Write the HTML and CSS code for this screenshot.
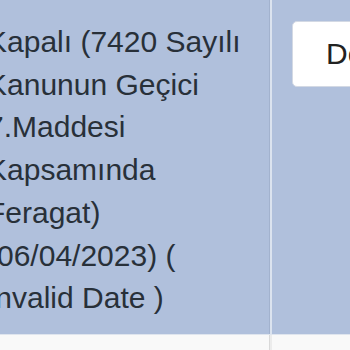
FILE: index.html
```html
<!DOCTYPE html>
<html>
<head>
<meta charset="utf-8">
<link rel="stylesheet" href="styles.css">
</head>
<body>
<div class="table">
  <div class="row row-active">
    <div class="cell cell-text">Kapalı (7420 Sayılı<br>Kanunun Geçici<br>7.Maddesi<br>Kapsamında<br>Feragat)<br>(06/04/2023) (<br>Invalid Date )</div>
    <div class="cell cell-action"><button class="btn">Detay</button></div>
  </div>
  <div class="row row-next">
    <div class="cell cell-text"></div>
    <div class="cell cell-action"></div>
  </div>
</div>
</body>
</html>
```

FILE: styles.css
```css
html, body {
  margin: 0;
  padding: 0;
  background: #f9f9f9;
  overflow: hidden;
}
.table {
  margin-left: -13px;
  width: 500px;
  font-family: "Liberation Sans", Arial, sans-serif;
  color: #283039;
}
.row {
  display: flex;
}
.row-active {
  background: #b0c0dc;
  border-bottom: 1px solid #dfe5ee;
}
.row-next {
  background: #f9f9f9;
  height: 40px;
}
.cell-text {
  flex: 0 0 283px;
  box-sizing: border-box;
  padding: 21px 10px 14px 0;
  font-size: 30px;
  line-height: 42.7px;
  white-space: nowrap;
  border-right: 1px solid #a2b2ce;
}
.row-next .cell-text {
  border-right: 1px solid #d9d9d9;
}
.cell-action {
  flex: 1;
  padding: 21px 0 0 20px;
  border-left: 2px solid #dbe3ef;
}
.row-next .cell-action {
  border-left: 2px solid #ececec;
}
.btn {
  height: 66px;
  padding: 0 20px 0 33px;
  background: #ffffff;
  border: 1px solid #d3d9e4;
  border-radius: 5px;
  font-family: "Liberation Sans", Arial, sans-serif;
  font-size: 30px;
  color: #222;
  white-space: nowrap;
}
```
